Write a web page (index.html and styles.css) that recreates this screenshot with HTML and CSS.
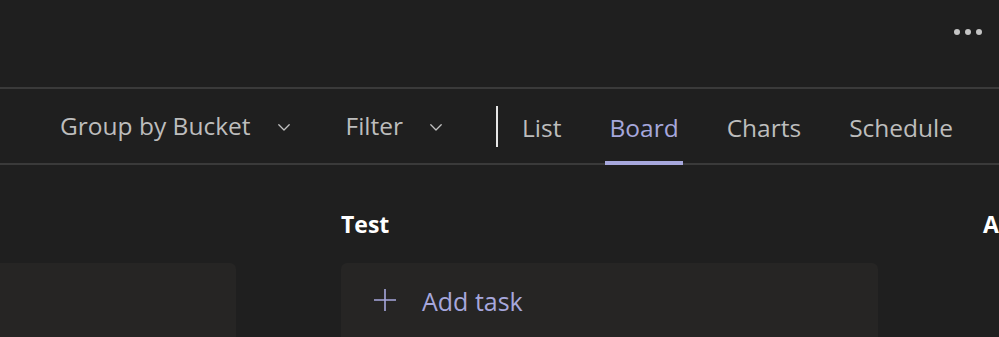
FILE: index.html
```html
<!DOCTYPE html>
<html lang="en">
<head>
<meta charset="utf-8">
<title>Planner Board</title>
<link rel="stylesheet" href="styles.css">
</head>
<body>
<header class="topbar">
  <button class="more" aria-label="More options">
    <span class="dot"></span><span class="dot"></span><span class="dot"></span>
  </button>
</header>
<nav class="toolbar">
  <div class="menu">
    <span class="menu-label">Group by Bucket</span>
    <svg class="chev" viewBox="0 0 12 7" width="12" height="7"><path d="M0.8 0.8 L6 6 L11.2 0.8" fill="none" stroke="currentColor" stroke-width="1.3" stroke-linecap="round" stroke-linejoin="round"/></svg>
  </div>
  <div class="menu last">
    <span class="menu-label">Filter</span>
    <svg class="chev" viewBox="0 0 12 7" width="12" height="7"><path d="M0.8 0.8 L6 6 L11.2 0.8" fill="none" stroke="currentColor" stroke-width="1.3" stroke-linecap="round" stroke-linejoin="round"/></svg>
  </div>
  <span class="divider"></span>
  <div class="tabs">
    <span class="tab">List</span>
    <span class="tab active">Board</span>
    <span class="tab">Charts</span>
    <span class="tab">Schedule</span>
  </div>
</nav>
<main class="board">
  <section class="column">
    <h2 class="col-title">&nbsp;</h2>
    <div class="card"></div>
  </section>
  <section class="column">
    <h2 class="col-title">Test</h2>
    <div class="card add">
      <svg class="plus" viewBox="0 0 24 24" width="24" height="24"><path d="M12 1 V23 M1 12 H23" fill="none" stroke="currentColor" stroke-width="1.6"/></svg>
      <span class="add-label">Add task</span>
    </div>
  </section>
  <section class="column">
    <h2 class="col-title">Add new bucket</h2>
  </section>
</main>
</body>
</html>
```
FILE: styles.css
```css
html, body {
  margin: 0;
  padding: 0;
  background: #1f1f1f;
  overflow: hidden;
}
body {
  font-family: "Open Sans", "Noto Sans", sans-serif;
  color: #c8c8c8;
  width: 999px;
  height: 337px;
}
.topbar {
  height: 87px;
  border-bottom: 2px solid #3a3a3a;
  display: flex;
  justify-content: flex-end;
  align-items: flex-start;
  padding-right: 17px;
}
.more {
  margin-top: 29px;
  background: none;
  border: 0;
  padding: 0;
  display: flex;
  gap: 5px;
}
.dot {
  width: 6px;
  height: 6px;
  border-radius: 50%;
  background: #c4c4c4;
}
.toolbar {
  height: 74px;
  border-bottom: 2px solid #3a3a3a;
  display: flex;
  align-items: center;
  padding-left: 60px;
  font-size: 24.5px;
  line-height: 32px;
}
.menu {
  display: flex;
  align-items: center;
  gap: 27px;
  margin-right: 56px;
  color: #bdbdbd;
}
.menu.last { margin-right: 54px; }
.menu-label { color: #bdbdbd; }
.chev { color: #c0c0c0; margin-top: 3px; }
.divider {
  width: 2px;
  height: 41px;
  background: #e6e6e6;
  margin-right: 20px;
}
.tabs {
  display: flex;
  align-self: stretch;
  gap: 40px;
}
.tab {
  position: relative;
  display: flex;
  align-items: center;
  padding: 3px 4px 0;
  color: #bdbdbd;
}
.tab.active { color: #a6a7dc; }
.tab.active::after {
  content: "";
  position: absolute;
  left: 0;
  right: 0;
  bottom: -2px;
  height: 4px;
  background: #a6a7dc;
}
.board {
  display: flex;
  gap: 105px;
  margin-left: -301px;
}
.column {
  width: 537px;
  flex: none;
}
.col-title {
  margin: 43px 0 0 0;
  font-size: 23px;
  font-weight: 700;
  line-height: 32px;
  color: #ffffff;
  white-space: nowrap;
}
.card {
  margin-top: 23px;
  height: 100px;
  background: #262524;
  border-radius: 6px;
}
.card.add {
  display: flex;
  align-items: flex-start;
  padding: 22px 0 0 32px;
  box-sizing: border-box;
  gap: 25px;
  color: #a6a7dc;
}
.plus { margin-top: 3px; }
.add-label {
  font-size: 25px;
  line-height: 32px;
}
```
